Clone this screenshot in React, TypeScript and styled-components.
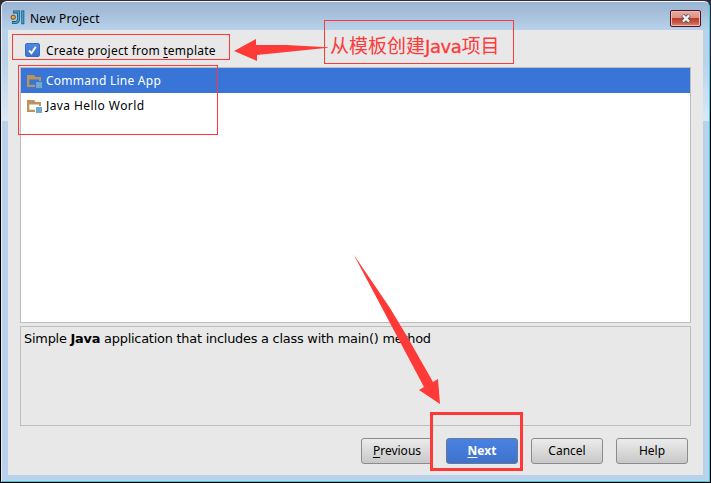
import React from "react";
import styled, { createGlobalStyle } from "styled-components";

const RED = "#fe3a38";

const GlobalStyle = createGlobalStyle`
  * { box-sizing: border-box; }
  body { margin: 0; background: #000; overflow: hidden; }
`;

const Desktop = styled.div`
  position: relative;
  width: 711px;
  height: 483px;
  padding: 1px;
  background: linear-gradient(#342d38 0, #17171b 90px, #000 120px);
  color: #000;
  font: 13px/18px "Noto Sans", "Noto Sans CJK SC", sans-serif;
`;

const DialogWindow = styled.div`
  display: flex;
  flex-direction: column;
  width: 709px;
  height: 481px;
  padding: 0 6px 6px;
  border: 1px solid #43c5dc;
  border-top-color: #f4f8fc;
  border-left-color: #e3edf7;
  border-radius: 6px 6px 0 0;
  background:
    linear-gradient(#b9d1ea, #b9d1ea) 0 119px / 100% 360px no-repeat,
    linear-gradient(#99b4d1 0, #b9d1ea 28px, #bad2ea 60px, #dce8f5 119px);
`;

const TitleBar = styled.header`
  display: flex;
  flex: 0 0 28px;
  align-items: center;
  padding: 3px 2px 0 2px;
`;

const Title = styled.span`
  flex: 1;
  margin: 3px 0 0 5px;
  font-size: 12px;
  letter-spacing: 0.22px;
`;

const CloseButton = styled.button`
  display: grid;
  place-items: center;
  width: 31px;
  height: 17px;
  margin-top: 2px;
  padding: 0;
  border: 1px solid #4b1424;
  border-radius: 2px;
  background: linear-gradient(#e8aaa0 0, #dc9184 46%, #b93c27 48%, #c85440 75%, #dc8c7c);
  box-shadow: inset 0 0 0 1px #efbcb2;
`;

const Content = styled.main`
  flex: 1;
  padding: 11px 12px;
  background: #e8e8e8;
`;

const CheckRow = styled.label`
  display: flex;
  align-items: center;
  height: 18px;
  margin: 0 0 8px 5px;
`;

const CheckBox = styled.span`
  display: grid;
  place-items: center;
  width: 15px;
  height: 14px;
  margin-right: 6px;
  border: 1px solid #376dc4;
  border-radius: 2px;
  background: linear-gradient(#4b88e4, #3d73cf);
`;

const Label = styled.span<{ $spacing?: number; $drop?: number }>`
  font-size: 12px;
  letter-spacing: ${(p) => p.$spacing ?? 0}px;
  padding-top: ${(p) => p.$drop ?? 0}px;
  white-space: nowrap;
`;

const Mnemonic = styled.span`
  text-decoration: underline;
  text-decoration-thickness: 1px;
  text-underline-offset: 2px;
  text-decoration-skip-ink: none;
`;

const TemplateList = styled.div`
  width: 671px;
  height: 256px;
  border: 1px solid #bdbdbd;
  background: #fff;
`;

const TemplateRow = styled.div<{ $selected?: boolean }>`
  display: flex;
  align-items: center;
  gap: 4px;
  height: 25px;
  padding-left: 6px;
  background: ${(p) => (p.$selected ? "#3875d7" : "transparent")};
  color: ${(p) => (p.$selected ? "#fff" : "#000")};
`;

const Description = styled.div`
  width: 671px;
  height: 100px;
  margin-top: 3px;
  padding: 3px;
  border: 1px solid #bdbdbd;
  font: 12.9px/18px "DejaVu Sans", sans-serif;
  letter-spacing: -0.23px;
  white-space: nowrap;
`;

const Actions = styled.footer`
  display: flex;
  justify-content: flex-end;
  gap: 13px;
  padding: 12px 3px 0 0;
`;

const Button = styled.button<{ $primary?: boolean }>`
  width: 72px;
  height: 26px;
  padding: 0;
  border: 1px solid ${(p) => (p.$primary ? "#687990" : "#8b8b8b")};
  border-radius: 3px;
  background: ${(p) => (p.$primary ? "linear-gradient(#4882e2, #3f72cc)" : "linear-gradient(#ececec, #c8c8c8)")};
  color: ${(p) => (p.$primary ? "#fff" : "#000")};
  font: ${(p) => (p.$primary ? 700 : 400)} 12px/22px "Noto Sans", sans-serif;
`;

const Highlight = styled.div<{ $x: number; $y: number; $w: number; $h: number; $line?: number }>`
  position: absolute;
  left: ${(p) => p.$x}px;
  top: ${(p) => p.$y}px;
  width: ${(p) => p.$w}px;
  height: ${(p) => p.$h}px;
  border: ${(p) => p.$line ?? 1}px solid ${RED};
  pointer-events: none;
`;

const Callout = styled(Highlight)`
  padding: 11px 0 0 5px;
  color: ${RED};
  font: 400 19px/26px "Noto Sans CJK SC", sans-serif;
  white-space: nowrap;
`;

const CalloutLatin = styled.span`
  font: 18px/26px "DejaVu Sans", sans-serif;
  letter-spacing: -0.4px;
  -webkit-text-stroke: 0.3px ${RED};
`;

const Arrows = styled.svg`
  position: absolute;
  inset: 0;
  pointer-events: none;
`;

const AppLogo = () => (
  <svg width="15" height="15" viewBox="0 0 15 15" fill="none">
    <path d="M3 2H8.6V8.5Q8.6 12.6 4.5 12.6H2" stroke="#17577f" strokeWidth="3" />
    <path d="M3.6 1.9H8.6V8.5Q8.6 12.6 4.5 12.6H2.6" stroke="#47a6cd" strokeWidth="1.4" />
    <path d="M12.8 .5V14.2" stroke="#17577f" strokeWidth="3" />
    <path d="M12.8 1.2V13.5" stroke="#47a6cd" strokeWidth="1.4" />
    <circle cx="3.2" cy="7.2" r="2.5" fill="#6b4a22" />
    <circle cx="3.2" cy="7.2" r="1.6" fill="#f2aa35" />
  </svg>
);

const FolderIcon = () => (
  <svg width="15" height="14" viewBox="0 0 15 14">
    <path d="M0 1H7L8.5 3H14V7H12V5.5H2.3V10.8H8V13H0Z" fill="#bd935b" />
    <path d="M9 8H15V14H9Z" fill="#6fa9ce" />
  </svg>
);

const templates = [
  { name: "Command Line App", spacing: 0.25 },
  { name: "Java Hello World", spacing: 0.42 },
];

export default function App() {
  return (
    <Desktop>
      <GlobalStyle />
      <DialogWindow>
        <TitleBar>
          <AppLogo />
          <Title>New Project</Title>
          <CloseButton aria-label="Close">
            <svg width="12" height="9" viewBox="0 0 12 9">
              <path d="M2.7 1.2 9.3 7.8M9.3 1.2 2.7 7.8" stroke="#4e5260" strokeWidth="4" />
              <path d="M2.9 1.4 9.1 7.6M9.1 1.4 2.9 7.6" stroke="#f5f5f5" strokeWidth="2.2" />
            </svg>
          </CloseButton>
        </TitleBar>
        <Content>
          <CheckRow>
            <CheckBox>
              <svg width="11" height="11" viewBox="0 0 11 11" fill="none">
                <path d="M2 5.5 4.5 8.2 8.8 1.7" stroke="#fff" strokeWidth="2" />
              </svg>
            </CheckBox>
            <Label $spacing={0.22} $drop={2}>
              Create project from <Mnemonic>t</Mnemonic>emplate
            </Label>
          </CheckRow>
          <TemplateList>
            {templates.map(({ name, spacing }, index) => (
              <TemplateRow key={name} $selected={index === 0}>
                <FolderIcon />
                <Label $spacing={spacing}>{name}</Label>
              </TemplateRow>
            ))}
          </TemplateList>
          <Description>
            Simple <b>Java</b> application that includes a class with main() method
          </Description>
          <Actions>
            <Button><Mnemonic>P</Mnemonic>revious</Button>
            <Button $primary><Mnemonic>N</Mnemonic>ext</Button>
            <Button>Cancel</Button>
            <Button>Help</Button>
          </Actions>
        </Content>
      </DialogWindow>
      <Highlight $x={12} $y={34} $w={218} $h={26} />
      <Highlight $x={18} $y={65} $w={200} $h={70} />
      <Callout $x={324} $y={20} $w={190} $h={44}>
        从模板创建<CalloutLatin>Java</CalloutLatin>项目
      </Callout>
      <Highlight $x={430} $y={412} $w={93} $h={59} $line={3} />
      <Arrows width="711" height="483" viewBox="0 0 711 483" fill={RED}>
        <path d="M234 51 256 39V45H286L328 47.2V47.8L257 55V61Z" />
        <path d="M353.6 254.5 390 308 408 338 433 382 438 379 440 404 419 390 424 387Z" />
      </Arrows>
    </Desktop>
  );
}
